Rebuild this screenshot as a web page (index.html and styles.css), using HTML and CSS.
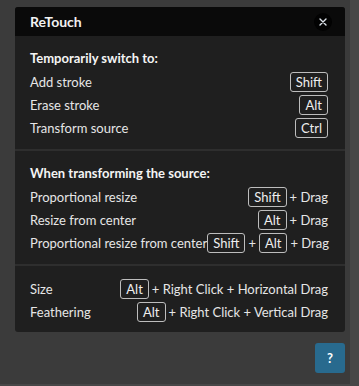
FILE: index.html
```html
<!DOCTYPE html>
<html lang="en">
<head>
    <meta charset="UTF-8">
    <meta name="viewport" content="width=device-width, initial-scale=1.0">
    <title>ReTouch</title>
    <link rel="stylesheet" href="styles.css">
</head>
<body>
    <div class="stage">
        <div class="dialog">
            <div class="dialog-header">
                <span class="dialog-title">ReTouch</span>
                <button class="close-btn" aria-label="Close">
                    <svg width="8" height="8" viewBox="0 0 8 8"><path d="M1 1L7 7M7 1L1 7" stroke="#dde3ea" stroke-width="1.4" stroke-linecap="round"/></svg>
                </button>
            </div>

            <div class="section">
                <div class="section-title">Temporarily switch to:</div>
                <div class="row">
                    <span>Add stroke</span>
                    <span class="keys"><kbd>Shift</kbd></span>
                </div>
                <div class="row">
                    <span>Erase stroke</span>
                    <span class="keys"><kbd>Alt</kbd></span>
                </div>
                <div class="row">
                    <span>Transform source</span>
                    <span class="keys"><kbd>Ctrl</kbd></span>
                </div>
            </div>

            <div class="section">
                <div class="section-title">When transforming the source:</div>
                <div class="row">
                    <span>Proportional resize</span>
                    <span class="keys"><kbd>Shift</kbd><span>+ Drag</span></span>
                </div>
                <div class="row">
                    <span>Resize from center</span>
                    <span class="keys"><kbd>Alt</kbd><span>+ Drag</span></span>
                </div>
                <div class="row">
                    <span>Proportional resize from center</span>
                    <span class="keys"><kbd>Shift</kbd><span>+</span><kbd>Alt</kbd><span>+ Drag</span></span>
                </div>
            </div>

            <div class="section last">
                <div class="row">
                    <span>Size</span>
                    <span class="keys"><kbd>Alt</kbd><span>+ Right Click + Horizontal Drag</span></span>
                </div>
                <div class="row">
                    <span>Feathering</span>
                    <span class="keys"><kbd>Alt</kbd><span>+ Right Click + Vertical Drag</span></span>
                </div>
            </div>
        </div>

        <div class="help-bar">
            <button class="help-btn">?</button>
        </div>
    </div>
</body>
</html>
```

FILE: styles.css
```css
body {
    margin: 0;
    background-color: #474747;
    font-family: Lato, "Open Sans", sans-serif;
    font-size: 13px;
    color: #e6e6e6;
}
.stage {
    width: 350px;
    height: 384px;
    background-color: #3b3b3b;
    padding-top: 7px;
    box-sizing: border-box;
}
.dialog {
    margin-left: 15px;
    width: 330px;
    background-color: #1f1f1f;
    border-radius: 3px;
    overflow: hidden;
}
.dialog-header {
    height: 29px;
    background-color: #0a0a0a;
    display: flex;
    align-items: center;
    justify-content: space-between;
    padding: 0 13px 0 15px;
}
.dialog-title {
    font-weight: bold;
    font-size: 14px;
    color: #f2f2f2;
}
.close-btn {
    width: 18px;
    height: 18px;
    border: none;
    border-radius: 50%;
    background-color: #020202;
    padding: 0;
    display: flex;
    align-items: center;
    justify-content: center;
}
.section {
    padding: 11px 17px 10px 15px;
    border-bottom: 2px solid #2e2e2e;
}
.section.last {
    border-bottom: none;
    padding-bottom: 9px;
}
.section-title {
    font-weight: bold;
    color: #f4f4f4;
    line-height: 23px;
}
.row {
    display: flex;
    justify-content: space-between;
    align-items: center;
    height: 23px;
    white-space: nowrap;
}
.keys {
    display: flex;
    align-items: center;
    gap: 3px;
    white-space: pre;
}
kbd {
    font-family: inherit;
    font-size: 13px;
    border: 1px solid #bdbdbd;
    border-radius: 3px;
    padding: 0 5px;
    height: 18px;
    line-height: 18px;
    color: #eeeeee;
}
.help-bar {
    width: 330px;
    margin-left: 15px;
    margin-top: 11px;
    display: flex;
    justify-content: flex-end;
}
.help-btn {
    width: 30px;
    height: 30px;
    border: none;
    border-radius: 3px;
    background-color: #286a8e;
    color: #ffffff;
    font-family: inherit;
    font-weight: bold;
    font-size: 13px;
    padding: 0;
}
```
